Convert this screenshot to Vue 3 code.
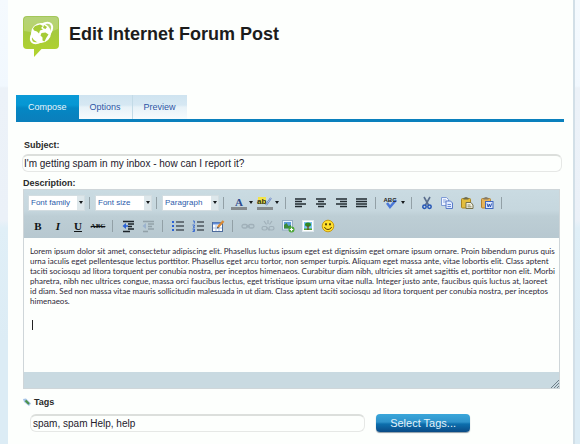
<script setup>
import { ref } from 'vue'

const tabs = ['Compose', 'Options', 'Preview']
const activeTab = ref('Compose')

const subject = ref("I'm getting spam in my inbox - how can I report it?")
const tags = ref('spam, spam Help, help')
const description = ref(
  'Lorem ipsum dolor sit amet, consectetur adipiscing elit. Phasellus luctus ipsum eget est dignissim eget ornare ipsum ornare. Proin bibendum purus quis urna iaculis eget pellentesque lectus porttitor. Phasellus eget arcu tortor, non semper turpis. Aliquam eget massa ante, vitae lobortis elit. Class aptent taciti sociosqu ad litora torquent per conubia nostra, per inceptos himenaeos. Curabitur diam nibh, ultricies sit amet sagittis et, porttitor non elit. Morbi pharetra, nibh nec ultrices congue, massa orci faucibus lectus, eget tristique ipsum urna vitae nulla. Integer justo ante, faucibus quis luctus at, laoreet\nid diam. Sed non massa vitae mauris sollicitudin malesuada in ut diam. Class aptent taciti sociosqu ad litora torquent per conubia nostra, per inceptos himenaeos.'
)

// 14x14 toolbar glyphs
const icons = {
  alignLeft: '<path d="M1 3h11M1 5.5h7M1 8h11M1 10.5h7" stroke="#222b30" stroke-width="1.5"/>',
  alignCenter: '<path d="M2 3h10M4 5.5h6M2 8h10M4 10.5h6" stroke="#222b30" stroke-width="1.5"/>',
  alignRight: '<path d="M2 3h11M6 5.5h7M2 8h11M6 10.5h7" stroke="#222b30" stroke-width="1.5"/>',
  alignFull: '<path d="M2 3h11M2 5.5h11M2 8h11M2 10.5h11" stroke="#222b30" stroke-width="1.5"/>',
  cut: '<path d="M4 1l4.500 8M10 1L5.500 9" stroke="#5b6f8e" stroke-width="1.600"/><circle cx="4.500" cy="10.800" r="1.700" fill="none" stroke="#2455b5" stroke-width="1.500"/><circle cx="9.500" cy="10.800" r="1.700" fill="none" stroke="#2455b5" stroke-width="1.500"/>',
  copy: '<path d="M1.500 1.500h5l2 2v6h-7z" fill="#eef4ff" stroke="#7f9bd6"/><path d="M3 4h3M3 6h3" stroke="#8aa5dd"/><path d="M6 5h4.500l2 2v5.500H6z" fill="#e2ecff" stroke="#5a7bc8"/><path d="M7.500 8.500h3.500M7.500 10.500h3.500" stroke="#6a8ad2"/>',
  paste: '<rect x="1.500" y="2.500" width="9" height="9.500" rx="1" fill="#e3bd3e" stroke="#a88422"/><path d="M3.500 3.500V2l2.500-1 2.500 1v1.500z" fill="#6d6a4a"/><path d="M6 6.500h5l2 2.500v3.500H6z" fill="#f3f3e8" stroke="#77724c"/><path d="M7.500 9h3M7.500 10.800h4" stroke="#8c8860"/>',
  pasteWord: '<rect x="1.500" y="2.500" width="9" height="9.500" rx="1" fill="#e6b45a" stroke="#b08232"/><path d="M3.500 3.500V2l2.500-1 2.500 1v1.500z" fill="#857a66"/><rect x="5.500" y="5.500" width="7.500" height="7" fill="#dce8ff" stroke="#3e66bf"/><path d="M7 7.500l1.200 3.500 1.100-3 1.100 3 1.200-3.500" fill="none" stroke="#2a52b0"/>',
  outdent: '<path d="M2 2.500h11M7 5h6M7 7.500h4M7 10h6M2 12.500h7" stroke="#1d242a" stroke-width="1.500"/><path d="M5 4v6L1.500 7z" fill="#2b62d6"/><path d="M4 7h3" stroke="#2b62d6" stroke-width="1.500"/>',
  indent: '<g opacity=".4"><path d="M2 2.500h11M7 5h6M7 7.500h4M7 10h6M2 12.500h5" stroke="#59656c" stroke-width="1.300"/><path d="M5 4v6L1.500 7z" fill="#6d8fc8"/></g>',
  bullets: '<path d="M5 3h8M5 7h8M5 11h8" stroke="#4c565d" stroke-width="1.300"/><path d="M2 2v2M2 6v2M2 10v2" stroke="#2b62d6" stroke-width="2"/>',
  numbers: '<path d="M6 3h7M6 7h7M6 11h7" stroke="#4c565d" stroke-width="1.300"/><path d="M2 2h1.300v2.500M1.500 6h2v1L2 8.200h2M1.500 10h2v2.500h-2M2 11.200h1.500" fill="none" stroke="#3b6bd0"/>',
  edit: '<rect x="1.500" y="3.500" width="10" height="9" fill="#fff" stroke="#4d6b9c"/><path d="M2 4.500h9" stroke="#5f8cd8" stroke-width="2"/><path d="M2 9h9M5 6v6M8 6v6" stroke="#a8c0e4"/><path d="M7 8L12.500 2" stroke="#d98a35" stroke-width="2.400"/><path d="M6 9.500l.500-2 1.500 1.500z" fill="#333"/>',
  link: '<g fill="none" stroke="#a0b0b9" stroke-width="1.300"><rect x="1" y="5.500" width="5.500" height="3.500" rx="1.700"/><rect x="7.500" y="5.500" width="5.500" height="3.500" rx="1.700"/><path d="M5 7.300h4"/></g>',
  unlink: '<g fill="none" stroke="#a0b0b9" stroke-width="1.200"><rect x="1" y="7.500" width="5" height="3.500" rx="1.700"/><rect x="8" y="7.500" width="5" height="3.500" rx="1.700"/><path d="M7 1v4M3 2l2.500 3.500M11 2L8.500 5.500M5.500 8l3 3.500"/></g>',
  image: '<rect x="1.500" y="1.500" width="10" height="9.500" fill="#e8f2fb" stroke="#93abc4"/><rect x="3" y="3" width="7" height="6.500" fill="#5d9edb"/><path d="M3 9.500V6l2.500-2 2 3 2.500-1v3.500z" fill="#3c8a3a"/><circle cx="10.500" cy="10.500" r="3" fill="#4aa535"/><path d="M10.500 8.800v3.400M8.800 10.500h3.400" stroke="#fff" stroke-width="1.200"/>',
  tree: '<rect x="1.500" y="1.500" width="11" height="11" fill="#fff" stroke="#dfe9ee"/><rect x="3" y="3" width="8" height="8" fill="#7dc4f2"/><path d="M3 9.500h8V11H3z" fill="#4fa62f"/><ellipse cx="7" cy="5.600" rx="3" ry="2.200" fill="#2f8a22"/><path d="M7 6.500V11" stroke="#70421c" stroke-width="1.300"/>',
  smile: '<circle cx="7" cy="7" r="5.800" fill="#ffe02e" stroke="#c99c14"/><ellipse cx="5" cy="5.300" rx=".8" ry="1.300" fill="#3c2c05"/><ellipse cx="9" cy="5.300" rx=".8" ry="1.300" fill="#3c2c05"/><path d="M3.500 8c1 3.300 6 3.300 7 0" fill="none" stroke="#5a3d05"/>'
}

const selects = ['Font family', 'Font size', 'Paragraph']
const alignTools = ['alignLeft', 'alignCenter', 'alignRight', 'alignFull']
const clipTools = ['cut', 'copy', 'paste', 'pasteWord']
const textTools = [
  { label: 'B', cls: 'bold' },
  { label: 'I', cls: 'italic' },
  { label: 'U', cls: 'underline' },
  { label: 'ABC', cls: 'strike' }
]
const groups = [
  ['outdent', 'indent'],
  ['bullets', 'numbers', 'edit'],
  ['link', 'unlink', 'image', 'tree', 'smile']
]
</script>

<template>
  <div class="page">
    <main class="panel">
      <header class="header">
        <svg class="logo" viewBox="0 0 38 42" aria-hidden="true">
          <defs>
            <linearGradient id="bubble" x1="0" y1="0" x2="0" y2="1">
              <stop offset="0" stop-color="#a3c75a" />
              <stop offset="0.45" stop-color="#a6cb3c" />
              <stop offset="1" stop-color="#b2d42c" />
            </linearGradient>
          </defs>
          <path d="M5 0h28q4 0 4 4v25q0 4-4 4H19.500L12 41V33H5q-4 0-4-4V4q0-4 4-4z" fill="url(#bubble)" />
          <path d="M5 1h28q3 0 3 3v9q-12 6-34 2V4q0-3 3-3z" fill="#fff" opacity="0.2" />
          <ellipse cx="19.500" cy="17" rx="13" ry="7" transform="rotate(-43 19.500 17)" fill="none" stroke="#fff" stroke-width="2" />
          <circle cx="19" cy="17" r="10" fill="#fff" />
          <path d="M13 10l5-1.500 3 1.500-2 2 2 1.500-3 1-1 3-2-2-3-1-1-2zM22 9l3 2-1.500 2-2.500-1zM19.500 17l4-.5 3 2-2 3-2 4-2-1v-3l-2-2z" fill="#a6cb36" />
        </svg>
        <h1>Edit Internet Forum Post</h1>
      </header>

      <nav class="tabs">
        <button
          v-for="tab in tabs"
          :key="tab"
          type="button"
          class="tab"
          :class="{ active: activeTab === tab }"
          @click="activeTab = tab"
        >{{ tab }}</button>
      </nav>

      <form class="form" @submit.prevent>
        <label class="label" for="subject">Subject:</label>
        <input id="subject" v-model="subject" class="field subject" type="text" />

        <label class="label description" for="description">Description:</label>
        <div class="editor">
          <div class="toolbar">
            <div class="row">
              <template v-for="name in selects" :key="name">
                <span class="select">
                  <select :aria-label="name">
                    <option>{{ name }}</option>
                  </select>
                  <span class="drop"><i class="arrow"></i></span>
                </span>
                <span class="sep"></span>
              </template>
              <button type="button" class="tool split" aria-label="Text color">
                <svg viewBox="0 0 16 14">
                  <text x="8" y="10" text-anchor="middle" font-family="Liberation Serif, serif" font-weight="bold" font-size="11" fill="#2c4a8c">A</text>
                  <path d="M0 11h16v3H0z" fill="#858b8d" />
                </svg>
                <i class="arrow"></i>
              </button>
              <button type="button" class="tool split" aria-label="Highlight color">
                <svg viewBox="0 0 16 14">
                  <path d="M1 1h8v7H1z" fill="#f2e34a" />
                  <text x="0" y="8" font-family="Liberation Sans, sans-serif" font-weight="bold" font-size="8" fill="#33331f">ab</text>
                  <path d="M9 9l5-7" stroke="#5878bd" stroke-width="2" />
                  <path d="M9 9l5-7" stroke="#e9eefa" stroke-width="0.600" />
                  <path d="M0 11h16v3H0z" fill="#858b8d" />
                </svg>
                <i class="arrow"></i>
              </button>
              <span class="sep"></span>
              <button v-for="icon in alignTools" :key="icon" type="button" class="tool" :aria-label="icon">
                <svg class="glyph" viewBox="0 0 14 14" v-html="icons[icon]"></svg>
              </button>
              <span class="sep"></span>
              <button type="button" class="tool split" aria-label="Spell check">
                <svg viewBox="0 0 16 14">
                  <path d="M4 7l3 4 6-7" fill="none" stroke="#4b78d8" stroke-width="2.500" />
                  <text x="7" y="6" text-anchor="middle" font-family="Liberation Sans, sans-serif" font-weight="bold" font-size="6" fill="#222">ABC</text>
                </svg>
                <i class="arrow"></i>
              </button>
              <span class="sep"></span>
              <button v-for="icon in clipTools" :key="icon" type="button" class="tool" :aria-label="icon">
                <svg class="glyph" viewBox="0 0 14 14" v-html="icons[icon]"></svg>
              </button>
              <span class="sep"></span>
            </div>
            <div class="row">
              <button v-for="t in textTools" :key="t.label" type="button" class="tool" :class="t.cls">{{ t.label }}</button>
              <template v-for="(group, i) in groups" :key="i">
                <span class="sep"></span>
                <button v-for="icon in group" :key="icon" type="button" class="tool" :aria-label="icon">
                  <svg class="glyph" viewBox="0 0 14 14" v-html="icons[icon]"></svg>
                </button>
              </template>
            </div>
          </div>
          <div class="content">
            <textarea id="description" v-model="description" rows="12" spellcheck="false"></textarea>
            <span class="caret"></span>
          </div>
          <div class="status">
            <svg class="grip" viewBox="0 0 8 8" aria-hidden="true">
              <path d="M0 8L8 0M3 8l5-5M6 8l2-2" stroke="#6f7f88" />
            </svg>
          </div>
        </div>

        <label class="label tags-label" for="tags">
          <svg class="tag-icon" viewBox="0 0 8 8" aria-hidden="true">
            <path d="M0 1l3-.5 5 5L6 8 1 4z" fill="#a5c3e6" />
            <path d="M2.500 2.500L6 6" stroke="#4a9147" stroke-width="2" />
          </svg>
          Tags
        </label>
        <div class="tags-row">
          <input id="tags" v-model="tags" class="field tags" type="text" />
          <button type="button" class="select-tags">Select Tags...</button>
        </div>
      </form>
    </main>
  </div>
</template>

<style>
body {
  margin: 0;
}
</style>

<style scoped>
.page {
  min-height: 100vh;
  box-sizing: border-box;
  padding: 0 5px 0 8px;
  display: flex;
  font-family: 'Liberation Sans', Arial, sans-serif;
  background: linear-gradient(#f5fafe 0, #f1f8fe 86px, #ecf2f8 88px, #ebf1f8 220px, #e0eff7 228px, #dcecf5 340px, #dcecf5 100%);
}

.panel {
  flex: 1;
  min-width: 0;
  padding: 0 9px 0 8px;
  background: #fdfffd;
  border-right: 2px solid #d2dfe7;
}

.header {
  display: flex;
  align-items: flex-start;
  gap: 9px;
  height: 79px;
  padding: 16px 0 0 6px;
}

.logo {
  width: 38px;
  height: 42px;
  flex-shrink: 0;
}

h1 {
  margin: 7px 0 0;
  font-size: 18px;
  line-height: 22px;
  font-weight: 700;
  color: #1c1c1c;
}

.tabs {
  display: flex;
  border-bottom: 3px solid #0a80bd;
}

.tab {
  height: 24px;
  padding: 0 11px;
  border: none;
  border-right: 1px solid #c3dbe7;
  background: linear-gradient(#cfe4f0 0, #d6e8f3 10px, #e7f2f8 12px, #f7fbfd 100%);
  font-family: inherit;
  font-size: 9px;
  color: #2b55a5;
  cursor: pointer;
}

.tab:last-child {
  border-right: none;
}

.tab.active {
  padding: 0 12px;
  background: linear-gradient(#0a9ad7 0, #0697d3 10px, #0487c4 13px, #0a80bd 100%);
  border-right: none;
  color: #e6f6fd;
}

.form {
  display: flex;
  flex-direction: column;
  padding: 17px 2px 0 6px;
}

.label {
  padding-left: 2px;
  font-size: 9px;
  line-height: 12px;
  font-weight: 700;
  color: #2a2a2a;
}

.field {
  box-sizing: border-box;
  height: 18px;
  padding: 0 2px;
  border: 1px solid #e6e8e6;
  border-top: 2px solid #dcdfdc;
  border-radius: 6px;
  background: #fdfffd;
  font-family: inherit;
  font-size: 10px;
  color: #24202c;
  outline: none;
}

.subject {
  width: 100%;
  margin-top: 3px;
  padding: 0 1px;
}

.description {
  margin-top: 5px;
  padding-left: 1px;
}

.editor {
  margin: 0 2px 0 1px;
  border: 1px solid #cfd6d9;
}

.toolbar {
  padding: 1px 4px;
  background: linear-gradient(#cadbe2 0, #c6d7de 20px, #bdced5 26px, #b7c8d0 100%);
}

.row {
  display: flex;
  align-items: center;
  height: 23px;
}

.select {
  display: flex;
  width: 57px;
  height: 16px;
  box-sizing: border-box;
  border: 1px solid #d3dde1;
  background: #fff;
}

.select select {
  appearance: none;
  flex: 1;
  min-width: 0;
  padding: 0 0 0 2px;
  border: none;
  background: transparent;
  font-family: inherit;
  font-size: 8px;
  color: #2d5cab;
}

.drop {
  display: flex;
  align-items: center;
  justify-content: center;
  width: 7px;
  background: #dde7eb;
}

.arrow {
  border: 2px solid transparent;
  border-top: 3px solid #15191b;
  border-bottom: none;
}

.sep {
  width: 1px;
  height: 12px;
  margin: 0 5px 0 4px;
  background: #92a0a6;
}

.tool {
  display: flex;
  align-items: center;
  justify-content: center;
  width: 20px;
  height: 20px;
  padding: 0;
  border: none;
  background: none;
  font-family: 'Liberation Serif', serif;
  font-size: 11px;
  font-weight: 700;
  color: #101416;
  cursor: pointer;
}

.tool svg {
  width: 16px;
  height: 14px;
  flex-shrink: 0;
  overflow: visible;
}

.tool .glyph {
  width: 14px;
}

.split {
  width: 26px;
  gap: 2px;
}

.italic {
  font-style: italic;
}

.underline {
  text-decoration: underline;
}

.strike {
  font-size: 7px;
  text-decoration: line-through;
}

.content {
  position: relative;
  background: #fdfffd;
}

textarea {
  display: block;
  box-sizing: border-box;
  width: 100%;
  padding: 8px 0 6px 6px;
  border: none;
  outline: none;
  resize: none;
  overflow: hidden;
  background: transparent;
  font-family: Lato, sans-serif;
  font-size: 8px;
  line-height: 10px;
  color: #2d2838;
}

.caret {
  position: absolute;
  left: 8px;
  top: 82px;
  width: 1px;
  height: 10px;
  background: #222;
}

.status {
  display: flex;
  align-items: flex-end;
  justify-content: flex-end;
  height: 16px;
  background: #c9dae1;
}

.grip {
  width: 8px;
  height: 8px;
}

.tags-label {
  display: flex;
  align-items: center;
  gap: 3px;
  margin-top: 7px;
  padding-left: 1px;
}

.tag-icon {
  width: 8px;
  height: 8px;
}

.tags-row {
  display: flex;
  gap: 11px;
  margin-top: 6px;
  padding-left: 8px;
}

.tags {
  width: 63%;
}

.select-tags {
  height: 18px;
  padding: 0 14px;
  border: none;
  border-radius: 4px;
  background: linear-gradient(#3aa7da 0, #2f93cb 8px, #0d6fad 10px, #0a4b86 100%);
  box-shadow: 0 1px 1px #8c9ba5;
  font-family: inherit;
  font-size: 11px;
  color: #e4f3fb;
  cursor: pointer;
}
</style>
